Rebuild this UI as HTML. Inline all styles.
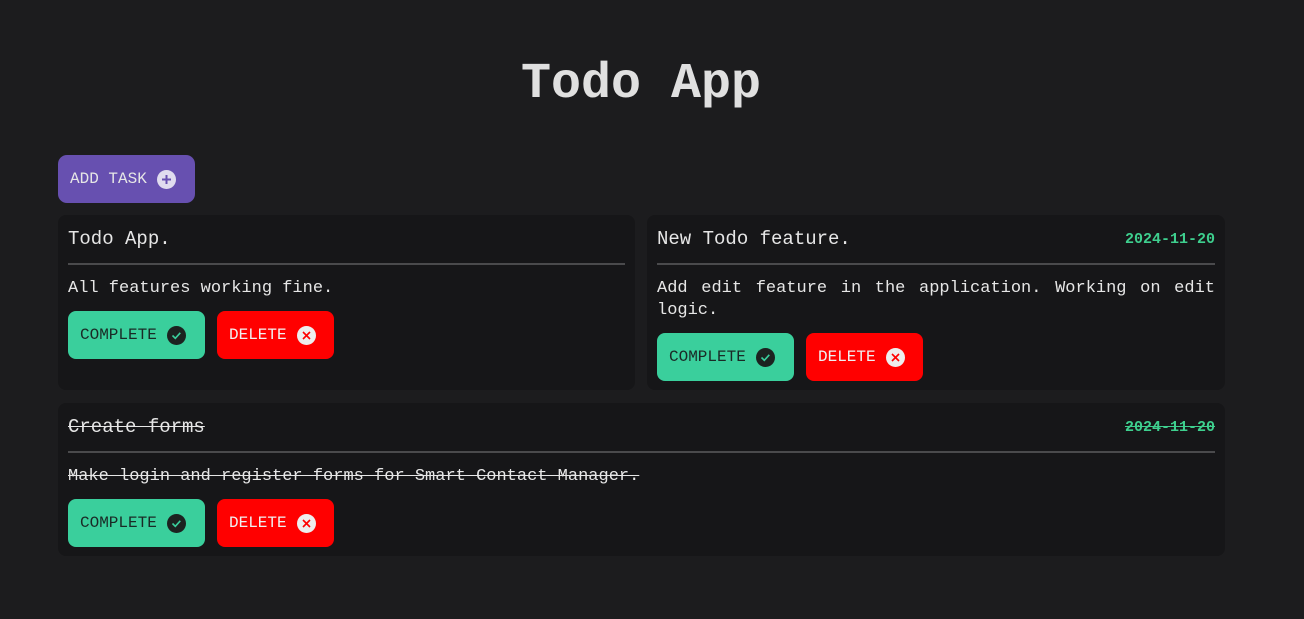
<!DOCTYPE html>
<html><head><style>
body{margin:0;background:#1c1c1e;font-family:"Liberation Mono",monospace;color:#e6e6e6;width:1304px;height:619px;overflow:hidden}
h1{margin:0;position:absolute;top:55px;left:-11px;width:1304px;text-align:center;font-size:50px;font-weight:bold;color:#e0e0e0;line-height:60px}
.add{position:absolute;left:58px;top:155px;width:137px;height:48px;background:#6750b0;border-radius:9px;color:#e6e6e6;font-size:16px;display:flex;align-items:center;padding-left:12px;box-sizing:border-box}
.card{position:absolute;background:#161618;border-radius:8px;padding:0 10px;box-sizing:border-box}
.head{display:flex;justify-content:space-between;align-items:center;height:48px;border-bottom:2px solid #4a4a4c;font-size:19px}
.date{color:#3ecf8e;font-weight:bold;font-size:15px}
.desc{font-size:17px;line-height:22px;margin-top:13px;text-align:justify}
.btns{display:flex;gap:12px;margin-top:11px}
.b{height:48px;border-radius:8px;display:flex;align-items:center;padding:0 12px;font-size:16px;box-sizing:border-box}
.c{background:#3acf9c;color:#1a2a26;width:137px}
.d{background:#ff0000;color:#f0f0f0;width:117px}
.ic{width:19px;height:19px;border-radius:50%;margin-left:10px;display:inline-flex;align-items:center;justify-content:center}
.s{text-decoration:line-through}
</style></head><body>
<h1>Todo App</h1>
<div class="add">ADD TASK<span class="ic" style="background:#e0dcef"><svg width="11" height="11" viewBox="0 0 11 11"><path d="M5.5 1v9M1 5.5h9" stroke="#6750b0" stroke-width="2"/></svg></span></div>

<div class="card" style="left:58px;top:215px;width:577px;height:175px">
<div class="head"><span>Todo App.</span></div>
<div class="desc">All features working fine.</div>
<div class="btns"><div class="b c">COMPLETE<span class="ic" style="background:#1c2220"><svg width="11" height="11" viewBox="0 0 11 11"><path d="M1.5 5.5l2.8 2.8 5-5.5" stroke="#3acf9c" stroke-width="1.6" fill="none"/></svg></span></div><div class="b d">DELETE<span class="ic" style="background:#eee"><svg width="9" height="9" viewBox="0 0 9 9"><path d="M1 1l7 7M8 1l-7 7" stroke="#f00" stroke-width="1.6"/></svg></span></div></div>
</div>

<div class="card" style="left:647px;top:215px;width:578px;height:175px">
<div class="head"><span>New Todo feature.</span><span class="date">2024-11-20</span></div>
<div class="desc">Add edit feature in the application. Working on edit logic.</div>
<div class="btns"><div class="b c">COMPLETE<span class="ic" style="background:#1c2220"><svg width="11" height="11" viewBox="0 0 11 11"><path d="M1.5 5.5l2.8 2.8 5-5.5" stroke="#3acf9c" stroke-width="1.6" fill="none"/></svg></span></div><div class="b d">DELETE<span class="ic" style="background:#eee"><svg width="9" height="9" viewBox="0 0 9 9"><path d="M1 1l7 7M8 1l-7 7" stroke="#f00" stroke-width="1.6"/></svg></span></div></div>
</div>

<div class="card" style="left:58px;top:403px;width:1167px;height:153px">
<div class="head"><span class="s">Create forms</span><span class="date s">2024-11-20</span></div>
<div class="desc s">Make login and register forms for Smart Contact Manager.</div>
<div class="btns"><div class="b c">COMPLETE<span class="ic" style="background:#1c2220"><svg width="11" height="11" viewBox="0 0 11 11"><path d="M1.5 5.5l2.8 2.8 5-5.5" stroke="#3acf9c" stroke-width="1.6" fill="none"/></svg></span></div><div class="b d">DELETE<span class="ic" style="background:#eee"><svg width="9" height="9" viewBox="0 0 9 9"><path d="M1 1l7 7M8 1l-7 7" stroke="#f00" stroke-width="1.6"/></svg></span></div></div>
</div>
</body></html>
